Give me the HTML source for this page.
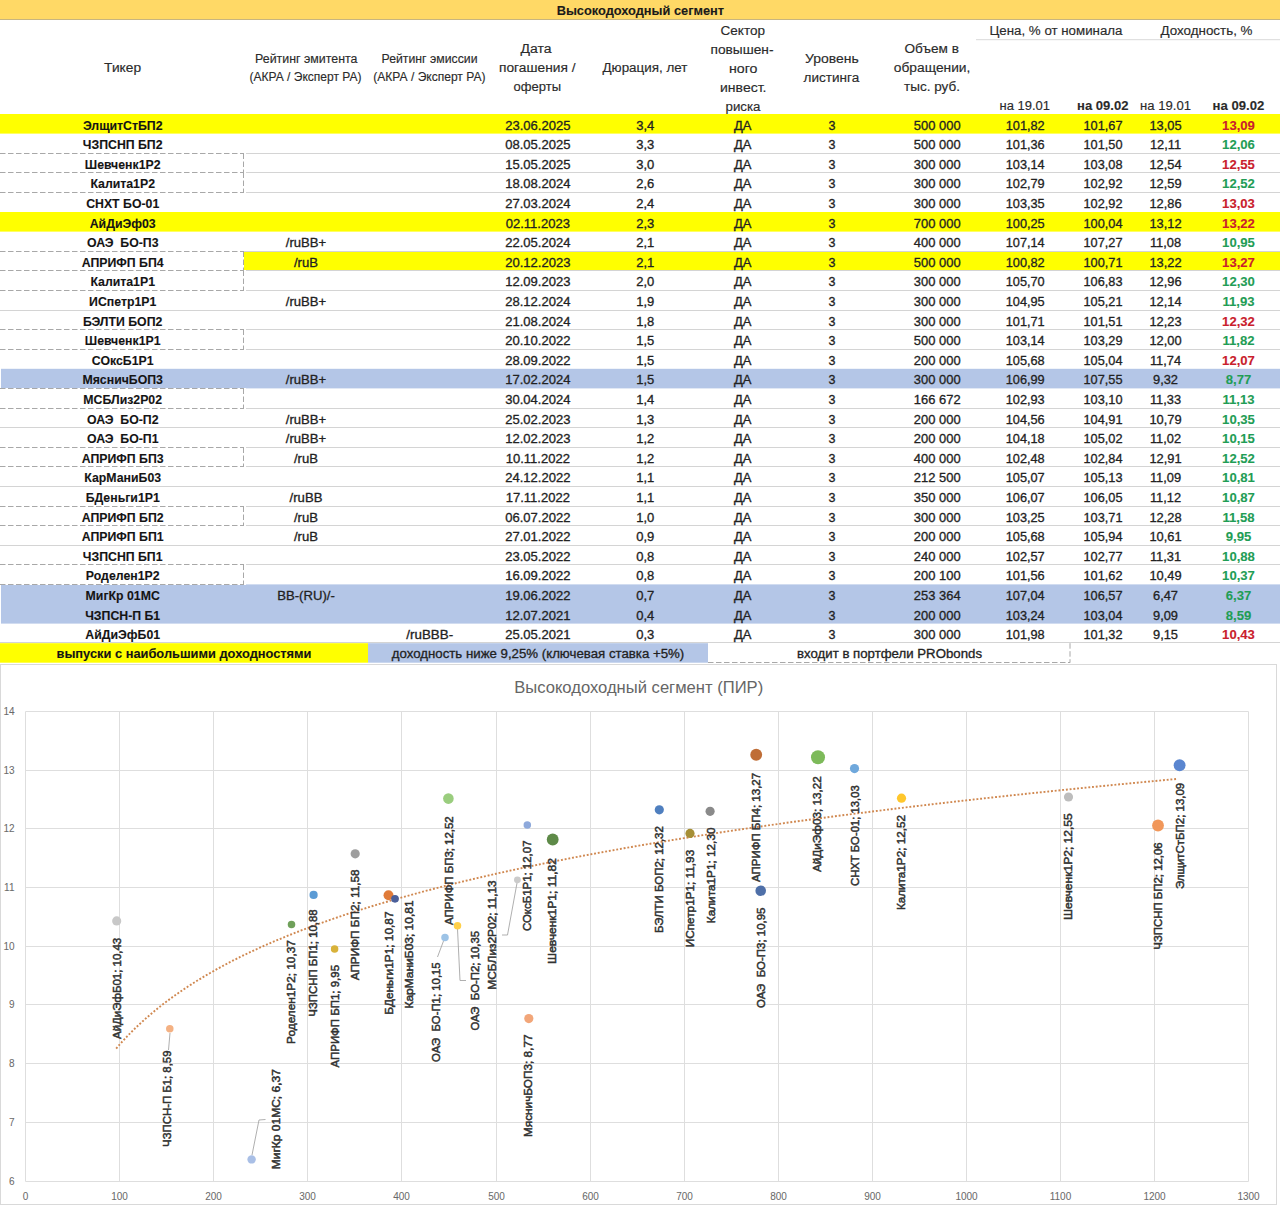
<!DOCTYPE html>
<html><head><meta charset="utf-8"><title>Высокодоходный сегмент</title>
<style>html,body{margin:0;padding:0;background:#fff;width:1280px;height:1210px;overflow:hidden}svg{display:block}text{font-family:"Liberation Sans",sans-serif}</style>
</head><body>
<svg width="1280" height="1210" viewBox="0 0 1280 1210" font-family='"Liberation Sans", sans-serif'><rect x="0.00" y="0.00" width="1280.00" height="19.50" fill="#FFD966" />
<line x1="0.00" y1="19.50" x2="1280.00" y2="19.50" stroke="#C7B57F" stroke-width="1" />
<text x="640.40" y="15.30" font-size="12.5" font-weight="bold" fill="#1a1a1a" stroke="#1a1a1a" stroke-width="0.1" text-anchor="middle" textLength="167.50" lengthAdjust="spacingAndGlyphs" >Высокодоходный сегмент</text>
<line x1="976.00" y1="39.70" x2="1280.00" y2="39.70" stroke="#D9D9D9" stroke-width="1" />
<rect x="0.00" y="114.00" width="1280.00" height="19.60" fill="#FFFF00" />
<rect x="0.00" y="212.00" width="1280.00" height="19.60" fill="#FFFF00" />
<rect x="244.00" y="251.20" width="1036.00" height="19.60" fill="#FFFF00" />
<rect x="1.00" y="368.80" width="1279.00" height="19.60" fill="#B4C6E7" />
<rect x="1.00" y="584.40" width="1279.00" height="19.60" fill="#B4C6E7" />
<rect x="1.00" y="604.00" width="1279.00" height="19.60" fill="#B4C6E7" />
<line x1="0.00" y1="153.50" x2="1280.00" y2="153.50" stroke="#D4D4D4" stroke-width="1" />
<line x1="0.00" y1="172.50" x2="1280.00" y2="172.50" stroke="#D4D4D4" stroke-width="1" />
<line x1="0.00" y1="192.50" x2="1280.00" y2="192.50" stroke="#D4D4D4" stroke-width="1" />
<line x1="0.00" y1="251.50" x2="1280.00" y2="251.50" stroke="#D4D4D4" stroke-width="1" />
<line x1="0.00" y1="270.50" x2="1280.00" y2="270.50" stroke="#D4D4D4" stroke-width="1" />
<line x1="0.00" y1="290.50" x2="1280.00" y2="290.50" stroke="#D4D4D4" stroke-width="1" />
<line x1="0.00" y1="310.50" x2="1280.00" y2="310.50" stroke="#D4D4D4" stroke-width="1" />
<line x1="0.00" y1="329.50" x2="1280.00" y2="329.50" stroke="#D4D4D4" stroke-width="1" />
<line x1="0.00" y1="349.50" x2="1280.00" y2="349.50" stroke="#D4D4D4" stroke-width="1" />
<line x1="0.00" y1="408.50" x2="1280.00" y2="408.50" stroke="#D4D4D4" stroke-width="1" />
<line x1="0.00" y1="427.50" x2="1280.00" y2="427.50" stroke="#D4D4D4" stroke-width="1" />
<line x1="0.00" y1="447.50" x2="1280.00" y2="447.50" stroke="#D4D4D4" stroke-width="1" />
<line x1="0.00" y1="466.50" x2="1280.00" y2="466.50" stroke="#D4D4D4" stroke-width="1" />
<line x1="0.00" y1="486.50" x2="1280.00" y2="486.50" stroke="#D4D4D4" stroke-width="1" />
<line x1="0.00" y1="506.50" x2="1280.00" y2="506.50" stroke="#D4D4D4" stroke-width="1" />
<line x1="0.00" y1="525.50" x2="1280.00" y2="525.50" stroke="#D4D4D4" stroke-width="1" />
<line x1="0.00" y1="545.50" x2="1280.00" y2="545.50" stroke="#D4D4D4" stroke-width="1" />
<line x1="0.00" y1="564.50" x2="1280.00" y2="564.50" stroke="#D4D4D4" stroke-width="1" />
<line x1="0.00" y1="642.50" x2="1280.00" y2="642.50" stroke="#D4D4D4" stroke-width="1" />
<rect x="0.00" y="153.00" width="246.00" height="20.00" fill="#FFFFFF" />
<line x1="0.00" y1="153.50" x2="244.00" y2="153.50" stroke="#A8A8A8" stroke-width="1" stroke-dasharray="5.5 2.5"/>
<line x1="0.00" y1="172.50" x2="244.00" y2="172.50" stroke="#A8A8A8" stroke-width="1" stroke-dasharray="5.5 2.5"/>
<line x1="243.50" y1="153.50" x2="243.50" y2="172.50" stroke="#A8A8A8" stroke-width="1" stroke-dasharray="5.5 2.5"/>
<rect x="0.00" y="172.00" width="246.00" height="21.00" fill="#FFFFFF" />
<line x1="0.00" y1="172.50" x2="244.00" y2="172.50" stroke="#A8A8A8" stroke-width="1" stroke-dasharray="5.5 2.5"/>
<line x1="0.00" y1="192.50" x2="244.00" y2="192.50" stroke="#A8A8A8" stroke-width="1" stroke-dasharray="5.5 2.5"/>
<line x1="243.50" y1="172.50" x2="243.50" y2="192.50" stroke="#A8A8A8" stroke-width="1" stroke-dasharray="5.5 2.5"/>
<rect x="0.00" y="251.00" width="244.00" height="20.00" fill="#FFFFFF" />
<line x1="0.00" y1="251.50" x2="244.00" y2="251.50" stroke="#A8A8A8" stroke-width="1" stroke-dasharray="5.5 2.5"/>
<line x1="0.00" y1="270.50" x2="244.00" y2="270.50" stroke="#A8A8A8" stroke-width="1" stroke-dasharray="5.5 2.5"/>
<line x1="243.50" y1="251.50" x2="243.50" y2="270.50" stroke="#A8A8A8" stroke-width="1" stroke-dasharray="5.5 2.5"/>
<rect x="0.00" y="270.00" width="246.00" height="21.00" fill="#FFFFFF" />
<line x1="0.00" y1="270.50" x2="244.00" y2="270.50" stroke="#A8A8A8" stroke-width="1" stroke-dasharray="5.5 2.5"/>
<line x1="0.00" y1="290.50" x2="244.00" y2="290.50" stroke="#A8A8A8" stroke-width="1" stroke-dasharray="5.5 2.5"/>
<line x1="243.50" y1="270.50" x2="243.50" y2="290.50" stroke="#A8A8A8" stroke-width="1" stroke-dasharray="5.5 2.5"/>
<rect x="0.00" y="329.00" width="246.00" height="21.00" fill="#FFFFFF" />
<line x1="0.00" y1="329.50" x2="244.00" y2="329.50" stroke="#A8A8A8" stroke-width="1" stroke-dasharray="5.5 2.5"/>
<line x1="0.00" y1="349.50" x2="244.00" y2="349.50" stroke="#A8A8A8" stroke-width="1" stroke-dasharray="5.5 2.5"/>
<line x1="243.50" y1="329.50" x2="243.50" y2="349.50" stroke="#A8A8A8" stroke-width="1" stroke-dasharray="5.5 2.5"/>
<rect x="0.00" y="388.00" width="246.00" height="21.00" fill="#FFFFFF" />
<line x1="0.00" y1="388.50" x2="244.00" y2="388.50" stroke="#A8A8A8" stroke-width="1" stroke-dasharray="5.5 2.5"/>
<line x1="0.00" y1="408.50" x2="244.00" y2="408.50" stroke="#A8A8A8" stroke-width="1" stroke-dasharray="5.5 2.5"/>
<line x1="243.50" y1="388.50" x2="243.50" y2="408.50" stroke="#A8A8A8" stroke-width="1" stroke-dasharray="5.5 2.5"/>
<rect x="0.00" y="447.00" width="246.00" height="20.00" fill="#FFFFFF" />
<line x1="0.00" y1="447.50" x2="244.00" y2="447.50" stroke="#A8A8A8" stroke-width="1" stroke-dasharray="5.5 2.5"/>
<line x1="0.00" y1="466.50" x2="244.00" y2="466.50" stroke="#A8A8A8" stroke-width="1" stroke-dasharray="5.5 2.5"/>
<line x1="243.50" y1="447.50" x2="243.50" y2="466.50" stroke="#A8A8A8" stroke-width="1" stroke-dasharray="5.5 2.5"/>
<rect x="0.00" y="506.00" width="246.00" height="20.00" fill="#FFFFFF" />
<line x1="0.00" y1="506.50" x2="244.00" y2="506.50" stroke="#A8A8A8" stroke-width="1" stroke-dasharray="5.5 2.5"/>
<line x1="0.00" y1="525.50" x2="244.00" y2="525.50" stroke="#A8A8A8" stroke-width="1" stroke-dasharray="5.5 2.5"/>
<line x1="243.50" y1="506.50" x2="243.50" y2="525.50" stroke="#A8A8A8" stroke-width="1" stroke-dasharray="5.5 2.5"/>
<rect x="0.00" y="564.00" width="246.00" height="21.00" fill="#FFFFFF" />
<line x1="0.00" y1="564.50" x2="244.00" y2="564.50" stroke="#A8A8A8" stroke-width="1" stroke-dasharray="5.5 2.5"/>
<line x1="0.00" y1="584.50" x2="244.00" y2="584.50" stroke="#A8A8A8" stroke-width="1" stroke-dasharray="5.5 2.5"/>
<line x1="243.50" y1="564.50" x2="243.50" y2="584.50" stroke="#A8A8A8" stroke-width="1" stroke-dasharray="5.5 2.5"/>
<text x="122.70" y="129.60" font-size="12.3" font-weight="bold" fill="#141414" stroke="#141414" stroke-width="0.1" text-anchor="middle" >ЭлщитСтБП2</text>
<text transform="translate(537.80,129.60) scale(1.045,1)" font-size="12.5" fill="#222" stroke="#222" stroke-width="0.3" text-anchor="middle" >23.06.2025</text>
<text transform="translate(645.30,129.60) scale(1.04,1)" font-size="12.5" fill="#222" stroke="#222" stroke-width="0.3" text-anchor="middle" >3,4</text>
<text transform="translate(742.80,129.60) scale(1.04,1)" font-size="12.5" fill="#222" stroke="#222" stroke-width="0.3" text-anchor="middle" >ДА</text>
<text x="832.00" y="129.60" font-size="12.5" fill="#222" stroke="#222" stroke-width="0.3" text-anchor="middle" >3</text>
<text transform="translate(937.20,129.60) scale(1.036,1)" font-size="12.5" fill="#222" stroke="#222" stroke-width="0.3" text-anchor="middle" >500 000</text>
<text transform="translate(1025.20,129.60) scale(1.02,1)" font-size="12.5" fill="#222" stroke="#222" stroke-width="0.3" text-anchor="middle" >101,82</text>
<text transform="translate(1103.00,129.60) scale(1.02,1)" font-size="12.5" fill="#222" stroke="#222" stroke-width="0.3" text-anchor="middle" >101,67</text>
<text transform="translate(1165.50,129.60) scale(1.03,1)" font-size="12.5" fill="#222" stroke="#222" stroke-width="0.3" text-anchor="middle" >13,05</text>
<text transform="translate(1238.50,129.60) scale(1.05,1)" font-size="12.5" font-weight="bold" fill="#C9202C" stroke="#C9202C" stroke-width="0.1" text-anchor="middle" >13,09</text>
<text x="122.70" y="149.20" font-size="12.3" font-weight="bold" fill="#141414" stroke="#141414" stroke-width="0.1" text-anchor="middle" >ЧЗПСНП БП2</text>
<text transform="translate(537.80,149.20) scale(1.045,1)" font-size="12.5" fill="#222" stroke="#222" stroke-width="0.3" text-anchor="middle" >08.05.2025</text>
<text transform="translate(645.30,149.20) scale(1.04,1)" font-size="12.5" fill="#222" stroke="#222" stroke-width="0.3" text-anchor="middle" >3,3</text>
<text transform="translate(742.80,149.20) scale(1.04,1)" font-size="12.5" fill="#222" stroke="#222" stroke-width="0.3" text-anchor="middle" >ДА</text>
<text x="832.00" y="149.20" font-size="12.5" fill="#222" stroke="#222" stroke-width="0.3" text-anchor="middle" >3</text>
<text transform="translate(937.20,149.20) scale(1.036,1)" font-size="12.5" fill="#222" stroke="#222" stroke-width="0.3" text-anchor="middle" >500 000</text>
<text transform="translate(1025.20,149.20) scale(1.02,1)" font-size="12.5" fill="#222" stroke="#222" stroke-width="0.3" text-anchor="middle" >101,36</text>
<text transform="translate(1103.00,149.20) scale(1.02,1)" font-size="12.5" fill="#222" stroke="#222" stroke-width="0.3" text-anchor="middle" >101,50</text>
<text transform="translate(1165.50,149.20) scale(1.03,1)" font-size="12.5" fill="#222" stroke="#222" stroke-width="0.3" text-anchor="middle" >12,11</text>
<text transform="translate(1238.50,149.20) scale(1.05,1)" font-size="12.5" font-weight="bold" fill="#1F9D55" stroke="#1F9D55" stroke-width="0.1" text-anchor="middle" >12,06</text>
<text x="122.70" y="168.80" font-size="12.3" font-weight="bold" fill="#141414" stroke="#141414" stroke-width="0.1" text-anchor="middle" >Шевченк1Р2</text>
<text transform="translate(537.80,168.80) scale(1.045,1)" font-size="12.5" fill="#222" stroke="#222" stroke-width="0.3" text-anchor="middle" >15.05.2025</text>
<text transform="translate(645.30,168.80) scale(1.04,1)" font-size="12.5" fill="#222" stroke="#222" stroke-width="0.3" text-anchor="middle" >3,0</text>
<text transform="translate(742.80,168.80) scale(1.04,1)" font-size="12.5" fill="#222" stroke="#222" stroke-width="0.3" text-anchor="middle" >ДА</text>
<text x="832.00" y="168.80" font-size="12.5" fill="#222" stroke="#222" stroke-width="0.3" text-anchor="middle" >3</text>
<text transform="translate(937.20,168.80) scale(1.036,1)" font-size="12.5" fill="#222" stroke="#222" stroke-width="0.3" text-anchor="middle" >300 000</text>
<text transform="translate(1025.20,168.80) scale(1.02,1)" font-size="12.5" fill="#222" stroke="#222" stroke-width="0.3" text-anchor="middle" >103,14</text>
<text transform="translate(1103.00,168.80) scale(1.02,1)" font-size="12.5" fill="#222" stroke="#222" stroke-width="0.3" text-anchor="middle" >103,08</text>
<text transform="translate(1165.50,168.80) scale(1.03,1)" font-size="12.5" fill="#222" stroke="#222" stroke-width="0.3" text-anchor="middle" >12,54</text>
<text transform="translate(1238.50,168.80) scale(1.05,1)" font-size="12.5" font-weight="bold" fill="#C9202C" stroke="#C9202C" stroke-width="0.1" text-anchor="middle" >12,55</text>
<text x="122.70" y="188.40" font-size="12.3" font-weight="bold" fill="#141414" stroke="#141414" stroke-width="0.1" text-anchor="middle" >Калита1Р2</text>
<text transform="translate(537.80,188.40) scale(1.045,1)" font-size="12.5" fill="#222" stroke="#222" stroke-width="0.3" text-anchor="middle" >18.08.2024</text>
<text transform="translate(645.30,188.40) scale(1.04,1)" font-size="12.5" fill="#222" stroke="#222" stroke-width="0.3" text-anchor="middle" >2,6</text>
<text transform="translate(742.80,188.40) scale(1.04,1)" font-size="12.5" fill="#222" stroke="#222" stroke-width="0.3" text-anchor="middle" >ДА</text>
<text x="832.00" y="188.40" font-size="12.5" fill="#222" stroke="#222" stroke-width="0.3" text-anchor="middle" >3</text>
<text transform="translate(937.20,188.40) scale(1.036,1)" font-size="12.5" fill="#222" stroke="#222" stroke-width="0.3" text-anchor="middle" >300 000</text>
<text transform="translate(1025.20,188.40) scale(1.02,1)" font-size="12.5" fill="#222" stroke="#222" stroke-width="0.3" text-anchor="middle" >102,79</text>
<text transform="translate(1103.00,188.40) scale(1.02,1)" font-size="12.5" fill="#222" stroke="#222" stroke-width="0.3" text-anchor="middle" >102,92</text>
<text transform="translate(1165.50,188.40) scale(1.03,1)" font-size="12.5" fill="#222" stroke="#222" stroke-width="0.3" text-anchor="middle" >12,59</text>
<text transform="translate(1238.50,188.40) scale(1.05,1)" font-size="12.5" font-weight="bold" fill="#1F9D55" stroke="#1F9D55" stroke-width="0.1" text-anchor="middle" >12,52</text>
<text x="122.70" y="208.00" font-size="12.3" font-weight="bold" fill="#141414" stroke="#141414" stroke-width="0.1" text-anchor="middle" >СНХТ БО-01</text>
<text transform="translate(537.80,208.00) scale(1.045,1)" font-size="12.5" fill="#222" stroke="#222" stroke-width="0.3" text-anchor="middle" >27.03.2024</text>
<text transform="translate(645.30,208.00) scale(1.04,1)" font-size="12.5" fill="#222" stroke="#222" stroke-width="0.3" text-anchor="middle" >2,4</text>
<text transform="translate(742.80,208.00) scale(1.04,1)" font-size="12.5" fill="#222" stroke="#222" stroke-width="0.3" text-anchor="middle" >ДА</text>
<text x="832.00" y="208.00" font-size="12.5" fill="#222" stroke="#222" stroke-width="0.3" text-anchor="middle" >3</text>
<text transform="translate(937.20,208.00) scale(1.036,1)" font-size="12.5" fill="#222" stroke="#222" stroke-width="0.3" text-anchor="middle" >300 000</text>
<text transform="translate(1025.20,208.00) scale(1.02,1)" font-size="12.5" fill="#222" stroke="#222" stroke-width="0.3" text-anchor="middle" >103,35</text>
<text transform="translate(1103.00,208.00) scale(1.02,1)" font-size="12.5" fill="#222" stroke="#222" stroke-width="0.3" text-anchor="middle" >102,92</text>
<text transform="translate(1165.50,208.00) scale(1.03,1)" font-size="12.5" fill="#222" stroke="#222" stroke-width="0.3" text-anchor="middle" >12,86</text>
<text transform="translate(1238.50,208.00) scale(1.05,1)" font-size="12.5" font-weight="bold" fill="#C9202C" stroke="#C9202C" stroke-width="0.1" text-anchor="middle" >13,03</text>
<text x="122.70" y="227.60" font-size="12.3" font-weight="bold" fill="#141414" stroke="#141414" stroke-width="0.1" text-anchor="middle" >АйДиЭф03</text>
<text transform="translate(537.80,227.60) scale(1.045,1)" font-size="12.5" fill="#222" stroke="#222" stroke-width="0.3" text-anchor="middle" >02.11.2023</text>
<text transform="translate(645.30,227.60) scale(1.04,1)" font-size="12.5" fill="#222" stroke="#222" stroke-width="0.3" text-anchor="middle" >2,3</text>
<text transform="translate(742.80,227.60) scale(1.04,1)" font-size="12.5" fill="#222" stroke="#222" stroke-width="0.3" text-anchor="middle" >ДА</text>
<text x="832.00" y="227.60" font-size="12.5" fill="#222" stroke="#222" stroke-width="0.3" text-anchor="middle" >3</text>
<text transform="translate(937.20,227.60) scale(1.036,1)" font-size="12.5" fill="#222" stroke="#222" stroke-width="0.3" text-anchor="middle" >700 000</text>
<text transform="translate(1025.20,227.60) scale(1.02,1)" font-size="12.5" fill="#222" stroke="#222" stroke-width="0.3" text-anchor="middle" >100,25</text>
<text transform="translate(1103.00,227.60) scale(1.02,1)" font-size="12.5" fill="#222" stroke="#222" stroke-width="0.3" text-anchor="middle" >100,04</text>
<text transform="translate(1165.50,227.60) scale(1.03,1)" font-size="12.5" fill="#222" stroke="#222" stroke-width="0.3" text-anchor="middle" >13,12</text>
<text transform="translate(1238.50,227.60) scale(1.05,1)" font-size="12.5" font-weight="bold" fill="#C9202C" stroke="#C9202C" stroke-width="0.1" text-anchor="middle" >13,22</text>
<text x="122.70" y="247.20" font-size="12.3" font-weight="bold" fill="#141414" stroke="#141414" stroke-width="0.1" text-anchor="middle" >ОАЭ  БО-П3</text>
<text transform="translate(306.00,247.20) scale(1.05,1)" font-size="12.5" fill="#222" stroke="#222" stroke-width="0.3" text-anchor="middle" >/ruBB+</text>
<text transform="translate(537.80,247.20) scale(1.045,1)" font-size="12.5" fill="#222" stroke="#222" stroke-width="0.3" text-anchor="middle" >22.05.2024</text>
<text transform="translate(645.30,247.20) scale(1.04,1)" font-size="12.5" fill="#222" stroke="#222" stroke-width="0.3" text-anchor="middle" >2,1</text>
<text transform="translate(742.80,247.20) scale(1.04,1)" font-size="12.5" fill="#222" stroke="#222" stroke-width="0.3" text-anchor="middle" >ДА</text>
<text x="832.00" y="247.20" font-size="12.5" fill="#222" stroke="#222" stroke-width="0.3" text-anchor="middle" >3</text>
<text transform="translate(937.20,247.20) scale(1.036,1)" font-size="12.5" fill="#222" stroke="#222" stroke-width="0.3" text-anchor="middle" >400 000</text>
<text transform="translate(1025.20,247.20) scale(1.02,1)" font-size="12.5" fill="#222" stroke="#222" stroke-width="0.3" text-anchor="middle" >107,14</text>
<text transform="translate(1103.00,247.20) scale(1.02,1)" font-size="12.5" fill="#222" stroke="#222" stroke-width="0.3" text-anchor="middle" >107,27</text>
<text transform="translate(1165.50,247.20) scale(1.03,1)" font-size="12.5" fill="#222" stroke="#222" stroke-width="0.3" text-anchor="middle" >11,08</text>
<text transform="translate(1238.50,247.20) scale(1.05,1)" font-size="12.5" font-weight="bold" fill="#1F9D55" stroke="#1F9D55" stroke-width="0.1" text-anchor="middle" >10,95</text>
<text x="122.70" y="266.80" font-size="12.3" font-weight="bold" fill="#141414" stroke="#141414" stroke-width="0.1" text-anchor="middle" >АПРИФП БП4</text>
<text transform="translate(306.00,266.80) scale(1.05,1)" font-size="12.5" fill="#222" stroke="#222" stroke-width="0.3" text-anchor="middle" >/ruB</text>
<text transform="translate(537.80,266.80) scale(1.045,1)" font-size="12.5" fill="#222" stroke="#222" stroke-width="0.3" text-anchor="middle" >20.12.2023</text>
<text transform="translate(645.30,266.80) scale(1.04,1)" font-size="12.5" fill="#222" stroke="#222" stroke-width="0.3" text-anchor="middle" >2,1</text>
<text transform="translate(742.80,266.80) scale(1.04,1)" font-size="12.5" fill="#222" stroke="#222" stroke-width="0.3" text-anchor="middle" >ДА</text>
<text x="832.00" y="266.80" font-size="12.5" fill="#222" stroke="#222" stroke-width="0.3" text-anchor="middle" >3</text>
<text transform="translate(937.20,266.80) scale(1.036,1)" font-size="12.5" fill="#222" stroke="#222" stroke-width="0.3" text-anchor="middle" >500 000</text>
<text transform="translate(1025.20,266.80) scale(1.02,1)" font-size="12.5" fill="#222" stroke="#222" stroke-width="0.3" text-anchor="middle" >100,82</text>
<text transform="translate(1103.00,266.80) scale(1.02,1)" font-size="12.5" fill="#222" stroke="#222" stroke-width="0.3" text-anchor="middle" >100,71</text>
<text transform="translate(1165.50,266.80) scale(1.03,1)" font-size="12.5" fill="#222" stroke="#222" stroke-width="0.3" text-anchor="middle" >13,22</text>
<text transform="translate(1238.50,266.80) scale(1.05,1)" font-size="12.5" font-weight="bold" fill="#C9202C" stroke="#C9202C" stroke-width="0.1" text-anchor="middle" >13,27</text>
<text x="122.70" y="286.40" font-size="12.3" font-weight="bold" fill="#141414" stroke="#141414" stroke-width="0.1" text-anchor="middle" >Калита1Р1</text>
<text transform="translate(537.80,286.40) scale(1.045,1)" font-size="12.5" fill="#222" stroke="#222" stroke-width="0.3" text-anchor="middle" >12.09.2023</text>
<text transform="translate(645.30,286.40) scale(1.04,1)" font-size="12.5" fill="#222" stroke="#222" stroke-width="0.3" text-anchor="middle" >2,0</text>
<text transform="translate(742.80,286.40) scale(1.04,1)" font-size="12.5" fill="#222" stroke="#222" stroke-width="0.3" text-anchor="middle" >ДА</text>
<text x="832.00" y="286.40" font-size="12.5" fill="#222" stroke="#222" stroke-width="0.3" text-anchor="middle" >3</text>
<text transform="translate(937.20,286.40) scale(1.036,1)" font-size="12.5" fill="#222" stroke="#222" stroke-width="0.3" text-anchor="middle" >300 000</text>
<text transform="translate(1025.20,286.40) scale(1.02,1)" font-size="12.5" fill="#222" stroke="#222" stroke-width="0.3" text-anchor="middle" >105,70</text>
<text transform="translate(1103.00,286.40) scale(1.02,1)" font-size="12.5" fill="#222" stroke="#222" stroke-width="0.3" text-anchor="middle" >106,83</text>
<text transform="translate(1165.50,286.40) scale(1.03,1)" font-size="12.5" fill="#222" stroke="#222" stroke-width="0.3" text-anchor="middle" >12,96</text>
<text transform="translate(1238.50,286.40) scale(1.05,1)" font-size="12.5" font-weight="bold" fill="#1F9D55" stroke="#1F9D55" stroke-width="0.1" text-anchor="middle" >12,30</text>
<text x="122.70" y="306.00" font-size="12.3" font-weight="bold" fill="#141414" stroke="#141414" stroke-width="0.1" text-anchor="middle" >ИСпетр1Р1</text>
<text transform="translate(306.00,306.00) scale(1.05,1)" font-size="12.5" fill="#222" stroke="#222" stroke-width="0.3" text-anchor="middle" >/ruBB+</text>
<text transform="translate(537.80,306.00) scale(1.045,1)" font-size="12.5" fill="#222" stroke="#222" stroke-width="0.3" text-anchor="middle" >28.12.2024</text>
<text transform="translate(645.30,306.00) scale(1.04,1)" font-size="12.5" fill="#222" stroke="#222" stroke-width="0.3" text-anchor="middle" >1,9</text>
<text transform="translate(742.80,306.00) scale(1.04,1)" font-size="12.5" fill="#222" stroke="#222" stroke-width="0.3" text-anchor="middle" >ДА</text>
<text x="832.00" y="306.00" font-size="12.5" fill="#222" stroke="#222" stroke-width="0.3" text-anchor="middle" >3</text>
<text transform="translate(937.20,306.00) scale(1.036,1)" font-size="12.5" fill="#222" stroke="#222" stroke-width="0.3" text-anchor="middle" >300 000</text>
<text transform="translate(1025.20,306.00) scale(1.02,1)" font-size="12.5" fill="#222" stroke="#222" stroke-width="0.3" text-anchor="middle" >104,95</text>
<text transform="translate(1103.00,306.00) scale(1.02,1)" font-size="12.5" fill="#222" stroke="#222" stroke-width="0.3" text-anchor="middle" >105,21</text>
<text transform="translate(1165.50,306.00) scale(1.03,1)" font-size="12.5" fill="#222" stroke="#222" stroke-width="0.3" text-anchor="middle" >12,14</text>
<text transform="translate(1238.50,306.00) scale(1.05,1)" font-size="12.5" font-weight="bold" fill="#1F9D55" stroke="#1F9D55" stroke-width="0.1" text-anchor="middle" >11,93</text>
<text x="122.70" y="325.60" font-size="12.3" font-weight="bold" fill="#141414" stroke="#141414" stroke-width="0.1" text-anchor="middle" >БЭЛТИ БОП2</text>
<text transform="translate(537.80,325.60) scale(1.045,1)" font-size="12.5" fill="#222" stroke="#222" stroke-width="0.3" text-anchor="middle" >21.08.2024</text>
<text transform="translate(645.30,325.60) scale(1.04,1)" font-size="12.5" fill="#222" stroke="#222" stroke-width="0.3" text-anchor="middle" >1,8</text>
<text transform="translate(742.80,325.60) scale(1.04,1)" font-size="12.5" fill="#222" stroke="#222" stroke-width="0.3" text-anchor="middle" >ДА</text>
<text x="832.00" y="325.60" font-size="12.5" fill="#222" stroke="#222" stroke-width="0.3" text-anchor="middle" >3</text>
<text transform="translate(937.20,325.60) scale(1.036,1)" font-size="12.5" fill="#222" stroke="#222" stroke-width="0.3" text-anchor="middle" >300 000</text>
<text transform="translate(1025.20,325.60) scale(1.02,1)" font-size="12.5" fill="#222" stroke="#222" stroke-width="0.3" text-anchor="middle" >101,71</text>
<text transform="translate(1103.00,325.60) scale(1.02,1)" font-size="12.5" fill="#222" stroke="#222" stroke-width="0.3" text-anchor="middle" >101,51</text>
<text transform="translate(1165.50,325.60) scale(1.03,1)" font-size="12.5" fill="#222" stroke="#222" stroke-width="0.3" text-anchor="middle" >12,23</text>
<text transform="translate(1238.50,325.60) scale(1.05,1)" font-size="12.5" font-weight="bold" fill="#C9202C" stroke="#C9202C" stroke-width="0.1" text-anchor="middle" >12,32</text>
<text x="122.70" y="345.20" font-size="12.3" font-weight="bold" fill="#141414" stroke="#141414" stroke-width="0.1" text-anchor="middle" >Шевченк1Р1</text>
<text transform="translate(537.80,345.20) scale(1.045,1)" font-size="12.5" fill="#222" stroke="#222" stroke-width="0.3" text-anchor="middle" >20.10.2022</text>
<text transform="translate(645.30,345.20) scale(1.04,1)" font-size="12.5" fill="#222" stroke="#222" stroke-width="0.3" text-anchor="middle" >1,5</text>
<text transform="translate(742.80,345.20) scale(1.04,1)" font-size="12.5" fill="#222" stroke="#222" stroke-width="0.3" text-anchor="middle" >ДА</text>
<text x="832.00" y="345.20" font-size="12.5" fill="#222" stroke="#222" stroke-width="0.3" text-anchor="middle" >3</text>
<text transform="translate(937.20,345.20) scale(1.036,1)" font-size="12.5" fill="#222" stroke="#222" stroke-width="0.3" text-anchor="middle" >500 000</text>
<text transform="translate(1025.20,345.20) scale(1.02,1)" font-size="12.5" fill="#222" stroke="#222" stroke-width="0.3" text-anchor="middle" >103,14</text>
<text transform="translate(1103.00,345.20) scale(1.02,1)" font-size="12.5" fill="#222" stroke="#222" stroke-width="0.3" text-anchor="middle" >103,29</text>
<text transform="translate(1165.50,345.20) scale(1.03,1)" font-size="12.5" fill="#222" stroke="#222" stroke-width="0.3" text-anchor="middle" >12,00</text>
<text transform="translate(1238.50,345.20) scale(1.05,1)" font-size="12.5" font-weight="bold" fill="#1F9D55" stroke="#1F9D55" stroke-width="0.1" text-anchor="middle" >11,82</text>
<text x="122.70" y="364.80" font-size="12.3" font-weight="bold" fill="#141414" stroke="#141414" stroke-width="0.1" text-anchor="middle" >СОксБ1Р1</text>
<text transform="translate(537.80,364.80) scale(1.045,1)" font-size="12.5" fill="#222" stroke="#222" stroke-width="0.3" text-anchor="middle" >28.09.2022</text>
<text transform="translate(645.30,364.80) scale(1.04,1)" font-size="12.5" fill="#222" stroke="#222" stroke-width="0.3" text-anchor="middle" >1,5</text>
<text transform="translate(742.80,364.80) scale(1.04,1)" font-size="12.5" fill="#222" stroke="#222" stroke-width="0.3" text-anchor="middle" >ДА</text>
<text x="832.00" y="364.80" font-size="12.5" fill="#222" stroke="#222" stroke-width="0.3" text-anchor="middle" >3</text>
<text transform="translate(937.20,364.80) scale(1.036,1)" font-size="12.5" fill="#222" stroke="#222" stroke-width="0.3" text-anchor="middle" >200 000</text>
<text transform="translate(1025.20,364.80) scale(1.02,1)" font-size="12.5" fill="#222" stroke="#222" stroke-width="0.3" text-anchor="middle" >105,68</text>
<text transform="translate(1103.00,364.80) scale(1.02,1)" font-size="12.5" fill="#222" stroke="#222" stroke-width="0.3" text-anchor="middle" >105,04</text>
<text transform="translate(1165.50,364.80) scale(1.03,1)" font-size="12.5" fill="#222" stroke="#222" stroke-width="0.3" text-anchor="middle" >11,74</text>
<text transform="translate(1238.50,364.80) scale(1.05,1)" font-size="12.5" font-weight="bold" fill="#C9202C" stroke="#C9202C" stroke-width="0.1" text-anchor="middle" >12,07</text>
<text x="122.70" y="384.40" font-size="12.3" font-weight="bold" fill="#141414" stroke="#141414" stroke-width="0.1" text-anchor="middle" >МясничБОП3</text>
<text transform="translate(306.00,384.40) scale(1.05,1)" font-size="12.5" fill="#222" stroke="#222" stroke-width="0.3" text-anchor="middle" >/ruBB+</text>
<text transform="translate(537.80,384.40) scale(1.045,1)" font-size="12.5" fill="#222" stroke="#222" stroke-width="0.3" text-anchor="middle" >17.02.2024</text>
<text transform="translate(645.30,384.40) scale(1.04,1)" font-size="12.5" fill="#222" stroke="#222" stroke-width="0.3" text-anchor="middle" >1,5</text>
<text transform="translate(742.80,384.40) scale(1.04,1)" font-size="12.5" fill="#222" stroke="#222" stroke-width="0.3" text-anchor="middle" >ДА</text>
<text x="832.00" y="384.40" font-size="12.5" fill="#222" stroke="#222" stroke-width="0.3" text-anchor="middle" >3</text>
<text transform="translate(937.20,384.40) scale(1.036,1)" font-size="12.5" fill="#222" stroke="#222" stroke-width="0.3" text-anchor="middle" >300 000</text>
<text transform="translate(1025.20,384.40) scale(1.02,1)" font-size="12.5" fill="#222" stroke="#222" stroke-width="0.3" text-anchor="middle" >106,99</text>
<text transform="translate(1103.00,384.40) scale(1.02,1)" font-size="12.5" fill="#222" stroke="#222" stroke-width="0.3" text-anchor="middle" >107,55</text>
<text transform="translate(1165.50,384.40) scale(1.03,1)" font-size="12.5" fill="#222" stroke="#222" stroke-width="0.3" text-anchor="middle" >9,32</text>
<text transform="translate(1238.50,384.40) scale(1.05,1)" font-size="12.5" font-weight="bold" fill="#1F9D55" stroke="#1F9D55" stroke-width="0.1" text-anchor="middle" >8,77</text>
<text x="122.70" y="404.00" font-size="12.3" font-weight="bold" fill="#141414" stroke="#141414" stroke-width="0.1" text-anchor="middle" >МСБЛиз2Р02</text>
<text transform="translate(537.80,404.00) scale(1.045,1)" font-size="12.5" fill="#222" stroke="#222" stroke-width="0.3" text-anchor="middle" >30.04.2024</text>
<text transform="translate(645.30,404.00) scale(1.04,1)" font-size="12.5" fill="#222" stroke="#222" stroke-width="0.3" text-anchor="middle" >1,4</text>
<text transform="translate(742.80,404.00) scale(1.04,1)" font-size="12.5" fill="#222" stroke="#222" stroke-width="0.3" text-anchor="middle" >ДА</text>
<text x="832.00" y="404.00" font-size="12.5" fill="#222" stroke="#222" stroke-width="0.3" text-anchor="middle" >3</text>
<text transform="translate(937.20,404.00) scale(1.036,1)" font-size="12.5" fill="#222" stroke="#222" stroke-width="0.3" text-anchor="middle" >166 672</text>
<text transform="translate(1025.20,404.00) scale(1.02,1)" font-size="12.5" fill="#222" stroke="#222" stroke-width="0.3" text-anchor="middle" >102,93</text>
<text transform="translate(1103.00,404.00) scale(1.02,1)" font-size="12.5" fill="#222" stroke="#222" stroke-width="0.3" text-anchor="middle" >103,10</text>
<text transform="translate(1165.50,404.00) scale(1.03,1)" font-size="12.5" fill="#222" stroke="#222" stroke-width="0.3" text-anchor="middle" >11,33</text>
<text transform="translate(1238.50,404.00) scale(1.05,1)" font-size="12.5" font-weight="bold" fill="#1F9D55" stroke="#1F9D55" stroke-width="0.1" text-anchor="middle" >11,13</text>
<text x="122.70" y="423.60" font-size="12.3" font-weight="bold" fill="#141414" stroke="#141414" stroke-width="0.1" text-anchor="middle" >ОАЭ  БО-П2</text>
<text transform="translate(306.00,423.60) scale(1.05,1)" font-size="12.5" fill="#222" stroke="#222" stroke-width="0.3" text-anchor="middle" >/ruBB+</text>
<text transform="translate(537.80,423.60) scale(1.045,1)" font-size="12.5" fill="#222" stroke="#222" stroke-width="0.3" text-anchor="middle" >25.02.2023</text>
<text transform="translate(645.30,423.60) scale(1.04,1)" font-size="12.5" fill="#222" stroke="#222" stroke-width="0.3" text-anchor="middle" >1,3</text>
<text transform="translate(742.80,423.60) scale(1.04,1)" font-size="12.5" fill="#222" stroke="#222" stroke-width="0.3" text-anchor="middle" >ДА</text>
<text x="832.00" y="423.60" font-size="12.5" fill="#222" stroke="#222" stroke-width="0.3" text-anchor="middle" >3</text>
<text transform="translate(937.20,423.60) scale(1.036,1)" font-size="12.5" fill="#222" stroke="#222" stroke-width="0.3" text-anchor="middle" >200 000</text>
<text transform="translate(1025.20,423.60) scale(1.02,1)" font-size="12.5" fill="#222" stroke="#222" stroke-width="0.3" text-anchor="middle" >104,56</text>
<text transform="translate(1103.00,423.60) scale(1.02,1)" font-size="12.5" fill="#222" stroke="#222" stroke-width="0.3" text-anchor="middle" >104,91</text>
<text transform="translate(1165.50,423.60) scale(1.03,1)" font-size="12.5" fill="#222" stroke="#222" stroke-width="0.3" text-anchor="middle" >10,79</text>
<text transform="translate(1238.50,423.60) scale(1.05,1)" font-size="12.5" font-weight="bold" fill="#1F9D55" stroke="#1F9D55" stroke-width="0.1" text-anchor="middle" >10,35</text>
<text x="122.70" y="443.20" font-size="12.3" font-weight="bold" fill="#141414" stroke="#141414" stroke-width="0.1" text-anchor="middle" >ОАЭ  БО-П1</text>
<text transform="translate(306.00,443.20) scale(1.05,1)" font-size="12.5" fill="#222" stroke="#222" stroke-width="0.3" text-anchor="middle" >/ruBB+</text>
<text transform="translate(537.80,443.20) scale(1.045,1)" font-size="12.5" fill="#222" stroke="#222" stroke-width="0.3" text-anchor="middle" >12.02.2023</text>
<text transform="translate(645.30,443.20) scale(1.04,1)" font-size="12.5" fill="#222" stroke="#222" stroke-width="0.3" text-anchor="middle" >1,2</text>
<text transform="translate(742.80,443.20) scale(1.04,1)" font-size="12.5" fill="#222" stroke="#222" stroke-width="0.3" text-anchor="middle" >ДА</text>
<text x="832.00" y="443.20" font-size="12.5" fill="#222" stroke="#222" stroke-width="0.3" text-anchor="middle" >3</text>
<text transform="translate(937.20,443.20) scale(1.036,1)" font-size="12.5" fill="#222" stroke="#222" stroke-width="0.3" text-anchor="middle" >200 000</text>
<text transform="translate(1025.20,443.20) scale(1.02,1)" font-size="12.5" fill="#222" stroke="#222" stroke-width="0.3" text-anchor="middle" >104,18</text>
<text transform="translate(1103.00,443.20) scale(1.02,1)" font-size="12.5" fill="#222" stroke="#222" stroke-width="0.3" text-anchor="middle" >105,02</text>
<text transform="translate(1165.50,443.20) scale(1.03,1)" font-size="12.5" fill="#222" stroke="#222" stroke-width="0.3" text-anchor="middle" >11,02</text>
<text transform="translate(1238.50,443.20) scale(1.05,1)" font-size="12.5" font-weight="bold" fill="#1F9D55" stroke="#1F9D55" stroke-width="0.1" text-anchor="middle" >10,15</text>
<text x="122.70" y="462.80" font-size="12.3" font-weight="bold" fill="#141414" stroke="#141414" stroke-width="0.1" text-anchor="middle" >АПРИФП БП3</text>
<text transform="translate(306.00,462.80) scale(1.05,1)" font-size="12.5" fill="#222" stroke="#222" stroke-width="0.3" text-anchor="middle" >/ruB</text>
<text transform="translate(537.80,462.80) scale(1.045,1)" font-size="12.5" fill="#222" stroke="#222" stroke-width="0.3" text-anchor="middle" >10.11.2022</text>
<text transform="translate(645.30,462.80) scale(1.04,1)" font-size="12.5" fill="#222" stroke="#222" stroke-width="0.3" text-anchor="middle" >1,2</text>
<text transform="translate(742.80,462.80) scale(1.04,1)" font-size="12.5" fill="#222" stroke="#222" stroke-width="0.3" text-anchor="middle" >ДА</text>
<text x="832.00" y="462.80" font-size="12.5" fill="#222" stroke="#222" stroke-width="0.3" text-anchor="middle" >3</text>
<text transform="translate(937.20,462.80) scale(1.036,1)" font-size="12.5" fill="#222" stroke="#222" stroke-width="0.3" text-anchor="middle" >400 000</text>
<text transform="translate(1025.20,462.80) scale(1.02,1)" font-size="12.5" fill="#222" stroke="#222" stroke-width="0.3" text-anchor="middle" >102,48</text>
<text transform="translate(1103.00,462.80) scale(1.02,1)" font-size="12.5" fill="#222" stroke="#222" stroke-width="0.3" text-anchor="middle" >102,84</text>
<text transform="translate(1165.50,462.80) scale(1.03,1)" font-size="12.5" fill="#222" stroke="#222" stroke-width="0.3" text-anchor="middle" >12,91</text>
<text transform="translate(1238.50,462.80) scale(1.05,1)" font-size="12.5" font-weight="bold" fill="#1F9D55" stroke="#1F9D55" stroke-width="0.1" text-anchor="middle" >12,52</text>
<text x="122.70" y="482.40" font-size="12.3" font-weight="bold" fill="#141414" stroke="#141414" stroke-width="0.1" text-anchor="middle" >КарМаниБ03</text>
<text transform="translate(537.80,482.40) scale(1.045,1)" font-size="12.5" fill="#222" stroke="#222" stroke-width="0.3" text-anchor="middle" >24.12.2022</text>
<text transform="translate(645.30,482.40) scale(1.04,1)" font-size="12.5" fill="#222" stroke="#222" stroke-width="0.3" text-anchor="middle" >1,1</text>
<text transform="translate(742.80,482.40) scale(1.04,1)" font-size="12.5" fill="#222" stroke="#222" stroke-width="0.3" text-anchor="middle" >ДА</text>
<text x="832.00" y="482.40" font-size="12.5" fill="#222" stroke="#222" stroke-width="0.3" text-anchor="middle" >3</text>
<text transform="translate(937.20,482.40) scale(1.036,1)" font-size="12.5" fill="#222" stroke="#222" stroke-width="0.3" text-anchor="middle" >212 500</text>
<text transform="translate(1025.20,482.40) scale(1.02,1)" font-size="12.5" fill="#222" stroke="#222" stroke-width="0.3" text-anchor="middle" >105,07</text>
<text transform="translate(1103.00,482.40) scale(1.02,1)" font-size="12.5" fill="#222" stroke="#222" stroke-width="0.3" text-anchor="middle" >105,13</text>
<text transform="translate(1165.50,482.40) scale(1.03,1)" font-size="12.5" fill="#222" stroke="#222" stroke-width="0.3" text-anchor="middle" >11,09</text>
<text transform="translate(1238.50,482.40) scale(1.05,1)" font-size="12.5" font-weight="bold" fill="#1F9D55" stroke="#1F9D55" stroke-width="0.1" text-anchor="middle" >10,81</text>
<text x="122.70" y="502.00" font-size="12.3" font-weight="bold" fill="#141414" stroke="#141414" stroke-width="0.1" text-anchor="middle" >БДеньги1Р1</text>
<text transform="translate(306.00,502.00) scale(1.05,1)" font-size="12.5" fill="#222" stroke="#222" stroke-width="0.3" text-anchor="middle" >/ruBB</text>
<text transform="translate(537.80,502.00) scale(1.045,1)" font-size="12.5" fill="#222" stroke="#222" stroke-width="0.3" text-anchor="middle" >17.11.2022</text>
<text transform="translate(645.30,502.00) scale(1.04,1)" font-size="12.5" fill="#222" stroke="#222" stroke-width="0.3" text-anchor="middle" >1,1</text>
<text transform="translate(742.80,502.00) scale(1.04,1)" font-size="12.5" fill="#222" stroke="#222" stroke-width="0.3" text-anchor="middle" >ДА</text>
<text x="832.00" y="502.00" font-size="12.5" fill="#222" stroke="#222" stroke-width="0.3" text-anchor="middle" >3</text>
<text transform="translate(937.20,502.00) scale(1.036,1)" font-size="12.5" fill="#222" stroke="#222" stroke-width="0.3" text-anchor="middle" >350 000</text>
<text transform="translate(1025.20,502.00) scale(1.02,1)" font-size="12.5" fill="#222" stroke="#222" stroke-width="0.3" text-anchor="middle" >106,07</text>
<text transform="translate(1103.00,502.00) scale(1.02,1)" font-size="12.5" fill="#222" stroke="#222" stroke-width="0.3" text-anchor="middle" >106,05</text>
<text transform="translate(1165.50,502.00) scale(1.03,1)" font-size="12.5" fill="#222" stroke="#222" stroke-width="0.3" text-anchor="middle" >11,12</text>
<text transform="translate(1238.50,502.00) scale(1.05,1)" font-size="12.5" font-weight="bold" fill="#1F9D55" stroke="#1F9D55" stroke-width="0.1" text-anchor="middle" >10,87</text>
<text x="122.70" y="521.60" font-size="12.3" font-weight="bold" fill="#141414" stroke="#141414" stroke-width="0.1" text-anchor="middle" >АПРИФП БП2</text>
<text transform="translate(306.00,521.60) scale(1.05,1)" font-size="12.5" fill="#222" stroke="#222" stroke-width="0.3" text-anchor="middle" >/ruB</text>
<text transform="translate(537.80,521.60) scale(1.045,1)" font-size="12.5" fill="#222" stroke="#222" stroke-width="0.3" text-anchor="middle" >06.07.2022</text>
<text transform="translate(645.30,521.60) scale(1.04,1)" font-size="12.5" fill="#222" stroke="#222" stroke-width="0.3" text-anchor="middle" >1,0</text>
<text transform="translate(742.80,521.60) scale(1.04,1)" font-size="12.5" fill="#222" stroke="#222" stroke-width="0.3" text-anchor="middle" >ДА</text>
<text x="832.00" y="521.60" font-size="12.5" fill="#222" stroke="#222" stroke-width="0.3" text-anchor="middle" >3</text>
<text transform="translate(937.20,521.60) scale(1.036,1)" font-size="12.5" fill="#222" stroke="#222" stroke-width="0.3" text-anchor="middle" >300 000</text>
<text transform="translate(1025.20,521.60) scale(1.02,1)" font-size="12.5" fill="#222" stroke="#222" stroke-width="0.3" text-anchor="middle" >103,25</text>
<text transform="translate(1103.00,521.60) scale(1.02,1)" font-size="12.5" fill="#222" stroke="#222" stroke-width="0.3" text-anchor="middle" >103,71</text>
<text transform="translate(1165.50,521.60) scale(1.03,1)" font-size="12.5" fill="#222" stroke="#222" stroke-width="0.3" text-anchor="middle" >12,28</text>
<text transform="translate(1238.50,521.60) scale(1.05,1)" font-size="12.5" font-weight="bold" fill="#1F9D55" stroke="#1F9D55" stroke-width="0.1" text-anchor="middle" >11,58</text>
<text x="122.70" y="541.20" font-size="12.3" font-weight="bold" fill="#141414" stroke="#141414" stroke-width="0.1" text-anchor="middle" >АПРИФП БП1</text>
<text transform="translate(306.00,541.20) scale(1.05,1)" font-size="12.5" fill="#222" stroke="#222" stroke-width="0.3" text-anchor="middle" >/ruB</text>
<text transform="translate(537.80,541.20) scale(1.045,1)" font-size="12.5" fill="#222" stroke="#222" stroke-width="0.3" text-anchor="middle" >27.01.2022</text>
<text transform="translate(645.30,541.20) scale(1.04,1)" font-size="12.5" fill="#222" stroke="#222" stroke-width="0.3" text-anchor="middle" >0,9</text>
<text transform="translate(742.80,541.20) scale(1.04,1)" font-size="12.5" fill="#222" stroke="#222" stroke-width="0.3" text-anchor="middle" >ДА</text>
<text x="832.00" y="541.20" font-size="12.5" fill="#222" stroke="#222" stroke-width="0.3" text-anchor="middle" >3</text>
<text transform="translate(937.20,541.20) scale(1.036,1)" font-size="12.5" fill="#222" stroke="#222" stroke-width="0.3" text-anchor="middle" >200 000</text>
<text transform="translate(1025.20,541.20) scale(1.02,1)" font-size="12.5" fill="#222" stroke="#222" stroke-width="0.3" text-anchor="middle" >105,68</text>
<text transform="translate(1103.00,541.20) scale(1.02,1)" font-size="12.5" fill="#222" stroke="#222" stroke-width="0.3" text-anchor="middle" >105,94</text>
<text transform="translate(1165.50,541.20) scale(1.03,1)" font-size="12.5" fill="#222" stroke="#222" stroke-width="0.3" text-anchor="middle" >10,61</text>
<text transform="translate(1238.50,541.20) scale(1.05,1)" font-size="12.5" font-weight="bold" fill="#1F9D55" stroke="#1F9D55" stroke-width="0.1" text-anchor="middle" >9,95</text>
<text x="122.70" y="560.80" font-size="12.3" font-weight="bold" fill="#141414" stroke="#141414" stroke-width="0.1" text-anchor="middle" >ЧЗПСНП БП1</text>
<text transform="translate(537.80,560.80) scale(1.045,1)" font-size="12.5" fill="#222" stroke="#222" stroke-width="0.3" text-anchor="middle" >23.05.2022</text>
<text transform="translate(645.30,560.80) scale(1.04,1)" font-size="12.5" fill="#222" stroke="#222" stroke-width="0.3" text-anchor="middle" >0,8</text>
<text transform="translate(742.80,560.80) scale(1.04,1)" font-size="12.5" fill="#222" stroke="#222" stroke-width="0.3" text-anchor="middle" >ДА</text>
<text x="832.00" y="560.80" font-size="12.5" fill="#222" stroke="#222" stroke-width="0.3" text-anchor="middle" >3</text>
<text transform="translate(937.20,560.80) scale(1.036,1)" font-size="12.5" fill="#222" stroke="#222" stroke-width="0.3" text-anchor="middle" >240 000</text>
<text transform="translate(1025.20,560.80) scale(1.02,1)" font-size="12.5" fill="#222" stroke="#222" stroke-width="0.3" text-anchor="middle" >102,57</text>
<text transform="translate(1103.00,560.80) scale(1.02,1)" font-size="12.5" fill="#222" stroke="#222" stroke-width="0.3" text-anchor="middle" >102,77</text>
<text transform="translate(1165.50,560.80) scale(1.03,1)" font-size="12.5" fill="#222" stroke="#222" stroke-width="0.3" text-anchor="middle" >11,31</text>
<text transform="translate(1238.50,560.80) scale(1.05,1)" font-size="12.5" font-weight="bold" fill="#1F9D55" stroke="#1F9D55" stroke-width="0.1" text-anchor="middle" >10,88</text>
<text x="122.70" y="580.40" font-size="12.3" font-weight="bold" fill="#141414" stroke="#141414" stroke-width="0.1" text-anchor="middle" >Роделен1Р2</text>
<text transform="translate(537.80,580.40) scale(1.045,1)" font-size="12.5" fill="#222" stroke="#222" stroke-width="0.3" text-anchor="middle" >16.09.2022</text>
<text transform="translate(645.30,580.40) scale(1.04,1)" font-size="12.5" fill="#222" stroke="#222" stroke-width="0.3" text-anchor="middle" >0,8</text>
<text transform="translate(742.80,580.40) scale(1.04,1)" font-size="12.5" fill="#222" stroke="#222" stroke-width="0.3" text-anchor="middle" >ДА</text>
<text x="832.00" y="580.40" font-size="12.5" fill="#222" stroke="#222" stroke-width="0.3" text-anchor="middle" >3</text>
<text transform="translate(937.20,580.40) scale(1.036,1)" font-size="12.5" fill="#222" stroke="#222" stroke-width="0.3" text-anchor="middle" >200 100</text>
<text transform="translate(1025.20,580.40) scale(1.02,1)" font-size="12.5" fill="#222" stroke="#222" stroke-width="0.3" text-anchor="middle" >101,56</text>
<text transform="translate(1103.00,580.40) scale(1.02,1)" font-size="12.5" fill="#222" stroke="#222" stroke-width="0.3" text-anchor="middle" >101,62</text>
<text transform="translate(1165.50,580.40) scale(1.03,1)" font-size="12.5" fill="#222" stroke="#222" stroke-width="0.3" text-anchor="middle" >10,49</text>
<text transform="translate(1238.50,580.40) scale(1.05,1)" font-size="12.5" font-weight="bold" fill="#1F9D55" stroke="#1F9D55" stroke-width="0.1" text-anchor="middle" >10,37</text>
<text x="122.70" y="600.00" font-size="12.3" font-weight="bold" fill="#141414" stroke="#141414" stroke-width="0.1" text-anchor="middle" >МигКр 01МС</text>
<text transform="translate(306.00,600.00) scale(1.05,1)" font-size="12.5" fill="#222" stroke="#222" stroke-width="0.3" text-anchor="middle" >BB-(RU)/-</text>
<text transform="translate(537.80,600.00) scale(1.045,1)" font-size="12.5" fill="#222" stroke="#222" stroke-width="0.3" text-anchor="middle" >19.06.2022</text>
<text transform="translate(645.30,600.00) scale(1.04,1)" font-size="12.5" fill="#222" stroke="#222" stroke-width="0.3" text-anchor="middle" >0,7</text>
<text transform="translate(742.80,600.00) scale(1.04,1)" font-size="12.5" fill="#222" stroke="#222" stroke-width="0.3" text-anchor="middle" >ДА</text>
<text x="832.00" y="600.00" font-size="12.5" fill="#222" stroke="#222" stroke-width="0.3" text-anchor="middle" >3</text>
<text transform="translate(937.20,600.00) scale(1.036,1)" font-size="12.5" fill="#222" stroke="#222" stroke-width="0.3" text-anchor="middle" >253 364</text>
<text transform="translate(1025.20,600.00) scale(1.02,1)" font-size="12.5" fill="#222" stroke="#222" stroke-width="0.3" text-anchor="middle" >107,04</text>
<text transform="translate(1103.00,600.00) scale(1.02,1)" font-size="12.5" fill="#222" stroke="#222" stroke-width="0.3" text-anchor="middle" >106,57</text>
<text transform="translate(1165.50,600.00) scale(1.03,1)" font-size="12.5" fill="#222" stroke="#222" stroke-width="0.3" text-anchor="middle" >6,47</text>
<text transform="translate(1238.50,600.00) scale(1.05,1)" font-size="12.5" font-weight="bold" fill="#1F9D55" stroke="#1F9D55" stroke-width="0.1" text-anchor="middle" >6,37</text>
<text x="122.70" y="619.60" font-size="12.3" font-weight="bold" fill="#141414" stroke="#141414" stroke-width="0.1" text-anchor="middle" >ЧЗПСН-П Б1</text>
<text transform="translate(537.80,619.60) scale(1.045,1)" font-size="12.5" fill="#222" stroke="#222" stroke-width="0.3" text-anchor="middle" >12.07.2021</text>
<text transform="translate(645.30,619.60) scale(1.04,1)" font-size="12.5" fill="#222" stroke="#222" stroke-width="0.3" text-anchor="middle" >0,4</text>
<text transform="translate(742.80,619.60) scale(1.04,1)" font-size="12.5" fill="#222" stroke="#222" stroke-width="0.3" text-anchor="middle" >ДА</text>
<text x="832.00" y="619.60" font-size="12.5" fill="#222" stroke="#222" stroke-width="0.3" text-anchor="middle" >3</text>
<text transform="translate(937.20,619.60) scale(1.036,1)" font-size="12.5" fill="#222" stroke="#222" stroke-width="0.3" text-anchor="middle" >200 000</text>
<text transform="translate(1025.20,619.60) scale(1.02,1)" font-size="12.5" fill="#222" stroke="#222" stroke-width="0.3" text-anchor="middle" >103,24</text>
<text transform="translate(1103.00,619.60) scale(1.02,1)" font-size="12.5" fill="#222" stroke="#222" stroke-width="0.3" text-anchor="middle" >103,04</text>
<text transform="translate(1165.50,619.60) scale(1.03,1)" font-size="12.5" fill="#222" stroke="#222" stroke-width="0.3" text-anchor="middle" >9,09</text>
<text transform="translate(1238.50,619.60) scale(1.05,1)" font-size="12.5" font-weight="bold" fill="#1F9D55" stroke="#1F9D55" stroke-width="0.1" text-anchor="middle" >8,59</text>
<text x="122.70" y="639.20" font-size="12.3" font-weight="bold" fill="#141414" stroke="#141414" stroke-width="0.1" text-anchor="middle" >АйДиЭфБ01</text>
<text transform="translate(429.70,639.20) scale(1.07,1)" font-size="12.5" fill="#222" stroke="#222" stroke-width="0.3" text-anchor="middle" >/ruBBB-</text>
<text transform="translate(537.80,639.20) scale(1.045,1)" font-size="12.5" fill="#222" stroke="#222" stroke-width="0.3" text-anchor="middle" >25.05.2021</text>
<text transform="translate(645.30,639.20) scale(1.04,1)" font-size="12.5" fill="#222" stroke="#222" stroke-width="0.3" text-anchor="middle" >0,3</text>
<text transform="translate(742.80,639.20) scale(1.04,1)" font-size="12.5" fill="#222" stroke="#222" stroke-width="0.3" text-anchor="middle" >ДА</text>
<text x="832.00" y="639.20" font-size="12.5" fill="#222" stroke="#222" stroke-width="0.3" text-anchor="middle" >3</text>
<text transform="translate(937.20,639.20) scale(1.036,1)" font-size="12.5" fill="#222" stroke="#222" stroke-width="0.3" text-anchor="middle" >300 000</text>
<text transform="translate(1025.20,639.20) scale(1.02,1)" font-size="12.5" fill="#222" stroke="#222" stroke-width="0.3" text-anchor="middle" >101,98</text>
<text transform="translate(1103.00,639.20) scale(1.02,1)" font-size="12.5" fill="#222" stroke="#222" stroke-width="0.3" text-anchor="middle" >101,32</text>
<text transform="translate(1165.50,639.20) scale(1.03,1)" font-size="12.5" fill="#222" stroke="#222" stroke-width="0.3" text-anchor="middle" >9,15</text>
<text transform="translate(1238.50,639.20) scale(1.05,1)" font-size="12.5" font-weight="bold" fill="#C9202C" stroke="#C9202C" stroke-width="0.1" text-anchor="middle" >10,43</text>
<text x="122.60" y="72.20" font-size="12.5" fill="#2b2b2b" stroke="#2b2b2b" stroke-width="0.15" text-anchor="middle" textLength="37.00" lengthAdjust="spacingAndGlyphs" >Тикер</text>
<text x="306.25" y="63.30" font-size="12.5" fill="#2b2b2b" stroke="#2b2b2b" stroke-width="0.15" text-anchor="middle" textLength="102.50" lengthAdjust="spacingAndGlyphs" >Рейтинг эмитента</text>
<text x="305.50" y="80.80" font-size="12.5" fill="#2b2b2b" stroke="#2b2b2b" stroke-width="0.15" text-anchor="middle" textLength="112.00" lengthAdjust="spacingAndGlyphs" >(АКРА / Эксперт РА)</text>
<text x="429.50" y="63.30" font-size="12.5" fill="#2b2b2b" stroke="#2b2b2b" stroke-width="0.15" text-anchor="middle" textLength="96.00" lengthAdjust="spacingAndGlyphs" >Рейтинг эмиссии</text>
<text x="429.40" y="80.80" font-size="12.5" fill="#2b2b2b" stroke="#2b2b2b" stroke-width="0.15" text-anchor="middle" textLength="112.25" lengthAdjust="spacingAndGlyphs" >(АКРА / Эксперт РА)</text>
<text x="536.00" y="52.90" font-size="12.5" fill="#2b2b2b" stroke="#2b2b2b" stroke-width="0.15" text-anchor="middle" textLength="31.00" lengthAdjust="spacingAndGlyphs" >Дата</text>
<text x="537.25" y="71.80" font-size="12.5" fill="#2b2b2b" stroke="#2b2b2b" stroke-width="0.15" text-anchor="middle" textLength="76.50" lengthAdjust="spacingAndGlyphs" >погашения /</text>
<text x="537.25" y="91.10" font-size="12.5" fill="#2b2b2b" stroke="#2b2b2b" stroke-width="0.15" text-anchor="middle" textLength="47.50" lengthAdjust="spacingAndGlyphs" >оферты</text>
<text x="645.00" y="72.00" font-size="12.5" fill="#2b2b2b" stroke="#2b2b2b" stroke-width="0.15" text-anchor="middle" textLength="85.00" lengthAdjust="spacingAndGlyphs" >Дюрация, лет</text>
<text x="742.75" y="34.50" font-size="12.5" fill="#2b2b2b" stroke="#2b2b2b" stroke-width="0.15" text-anchor="middle" textLength="44.50" lengthAdjust="spacingAndGlyphs" >Сектор</text>
<text x="742.00" y="53.50" font-size="12.5" fill="#2b2b2b" stroke="#2b2b2b" stroke-width="0.15" text-anchor="middle" textLength="63.00" lengthAdjust="spacingAndGlyphs" >повышен-</text>
<text x="743.25" y="72.50" font-size="12.5" fill="#2b2b2b" stroke="#2b2b2b" stroke-width="0.15" text-anchor="middle" textLength="28.50" lengthAdjust="spacingAndGlyphs" >ного</text>
<text x="743.25" y="91.50" font-size="12.5" fill="#2b2b2b" stroke="#2b2b2b" stroke-width="0.15" text-anchor="middle" textLength="46.50" lengthAdjust="spacingAndGlyphs" >инвест.</text>
<text x="743.00" y="110.50" font-size="12.5" fill="#2b2b2b" stroke="#2b2b2b" stroke-width="0.15" text-anchor="middle" textLength="35.00" lengthAdjust="spacingAndGlyphs" >риска</text>
<text x="831.80" y="63.00" font-size="12.5" fill="#2b2b2b" stroke="#2b2b2b" stroke-width="0.15" text-anchor="middle" textLength="53.80" lengthAdjust="spacingAndGlyphs" >Уровень</text>
<text x="831.35" y="82.00" font-size="12.5" fill="#2b2b2b" stroke="#2b2b2b" stroke-width="0.15" text-anchor="middle" textLength="55.70" lengthAdjust="spacingAndGlyphs" >листинга</text>
<text x="931.70" y="52.50" font-size="12.5" fill="#2b2b2b" stroke="#2b2b2b" stroke-width="0.15" text-anchor="middle" textLength="54.40" lengthAdjust="spacingAndGlyphs" >Объем в</text>
<text x="932.10" y="72.00" font-size="12.5" fill="#2b2b2b" stroke="#2b2b2b" stroke-width="0.15" text-anchor="middle" textLength="76.60" lengthAdjust="spacingAndGlyphs" >обращении,</text>
<text x="932.00" y="90.50" font-size="12.5" fill="#2b2b2b" stroke="#2b2b2b" stroke-width="0.15" text-anchor="middle" textLength="55.90" lengthAdjust="spacingAndGlyphs" >тыс. руб.</text>
<text x="1056.00" y="34.80" font-size="12.5" fill="#2b2b2b" stroke="#2b2b2b" stroke-width="0.15" text-anchor="middle" textLength="133.00" lengthAdjust="spacingAndGlyphs" >Цена, % от номинала</text>
<text x="1206.50" y="34.80" font-size="12.5" fill="#2b2b2b" stroke="#2b2b2b" stroke-width="0.15" text-anchor="middle" textLength="92.00" lengthAdjust="spacingAndGlyphs" >Доходность, %</text>
<text x="1024.75" y="110.20" font-size="12.5" fill="#2b2b2b" stroke="#2b2b2b" stroke-width="0.15" text-anchor="middle" textLength="50.50" lengthAdjust="spacingAndGlyphs" >на 19.01</text>
<text x="1102.75" y="110.20" font-size="12.5" font-weight="bold" fill="#2b2b2b" stroke="#2b2b2b" stroke-width="0.1" text-anchor="middle" textLength="51.50" lengthAdjust="spacingAndGlyphs" >на 09.02</text>
<text x="1165.50" y="110.20" font-size="12.5" fill="#2b2b2b" stroke="#2b2b2b" stroke-width="0.15" text-anchor="middle" textLength="51.00" lengthAdjust="spacingAndGlyphs" >на 19.01</text>
<text x="1238.40" y="110.20" font-size="12.5" font-weight="bold" fill="#2b2b2b" stroke="#2b2b2b" stroke-width="0.1" text-anchor="middle" textLength="51.75" lengthAdjust="spacingAndGlyphs" >на 09.02</text>
<rect x="0.00" y="643.20" width="368.00" height="19.50" fill="#FFFF00" />
<rect x="368.00" y="643.20" width="340.00" height="19.50" fill="#B4C6E7" />
<line x1="708.00" y1="662.50" x2="1070.00" y2="662.50" stroke="#A8A8A8" stroke-width="1" stroke-dasharray="5.5 2.5"/>
<line x1="1070.00" y1="643.20" x2="1070.00" y2="662.70" stroke="#A8A8A8" stroke-width="1" stroke-dasharray="5.5 2.5"/>
<text x="184.00" y="658.00" font-size="12.5" font-weight="bold" fill="#141414" stroke="#141414" stroke-width="0.1" text-anchor="middle" textLength="255.00" lengthAdjust="spacingAndGlyphs" >выпуски с наибольшими доходностями</text>
<text x="538.00" y="658.00" font-size="12.5" fill="#222" stroke="#222" stroke-width="0.3" text-anchor="middle" textLength="292.50" lengthAdjust="spacingAndGlyphs" >доходность ниже 9,25% (ключевая ставка +5%)</text>
<text x="889.50" y="658.00" font-size="12.5" fill="#222" stroke="#222" stroke-width="0.3" text-anchor="middle" textLength="185.00" lengthAdjust="spacingAndGlyphs" >входит в портфели PRObonds</text>
<rect x="0.5" y="664.5" width="1276" height="540" fill="#fff" stroke="#D9D9D9" stroke-width="1"/>
<line x1="25.50" y1="711.50" x2="1248.50" y2="711.50" stroke="#DEDEDE" stroke-width="1" />
<text x="14.50" y="715.10" font-size="10" fill="#6a6a6a" stroke="#6a6a6a" stroke-width="0.05" text-anchor="end" >14</text>
<line x1="25.50" y1="770.50" x2="1248.50" y2="770.50" stroke="#DEDEDE" stroke-width="1" />
<text x="14.50" y="774.10" font-size="10" fill="#6a6a6a" stroke="#6a6a6a" stroke-width="0.05" text-anchor="end" >13</text>
<line x1="25.50" y1="828.50" x2="1248.50" y2="828.50" stroke="#DEDEDE" stroke-width="1" />
<text x="14.50" y="832.10" font-size="10" fill="#6a6a6a" stroke="#6a6a6a" stroke-width="0.05" text-anchor="end" >12</text>
<line x1="25.50" y1="887.50" x2="1248.50" y2="887.50" stroke="#DEDEDE" stroke-width="1" />
<text x="14.50" y="891.10" font-size="10" fill="#6a6a6a" stroke="#6a6a6a" stroke-width="0.05" text-anchor="end" >11</text>
<line x1="25.50" y1="946.50" x2="1248.50" y2="946.50" stroke="#DEDEDE" stroke-width="1" />
<text x="14.50" y="950.10" font-size="10" fill="#6a6a6a" stroke="#6a6a6a" stroke-width="0.05" text-anchor="end" >10</text>
<line x1="25.50" y1="1004.50" x2="1248.50" y2="1004.50" stroke="#DEDEDE" stroke-width="1" />
<text x="14.50" y="1008.10" font-size="10" fill="#6a6a6a" stroke="#6a6a6a" stroke-width="0.05" text-anchor="end" >9</text>
<line x1="25.50" y1="1063.50" x2="1248.50" y2="1063.50" stroke="#DEDEDE" stroke-width="1" />
<text x="14.50" y="1067.10" font-size="10" fill="#6a6a6a" stroke="#6a6a6a" stroke-width="0.05" text-anchor="end" >8</text>
<line x1="25.50" y1="1122.50" x2="1248.50" y2="1122.50" stroke="#DEDEDE" stroke-width="1" />
<text x="14.50" y="1126.10" font-size="10" fill="#6a6a6a" stroke="#6a6a6a" stroke-width="0.05" text-anchor="end" >7</text>
<line x1="25.50" y1="1181.50" x2="1248.50" y2="1181.50" stroke="#DEDEDE" stroke-width="1" />
<text x="14.50" y="1185.10" font-size="10" fill="#6a6a6a" stroke="#6a6a6a" stroke-width="0.05" text-anchor="end" >6</text>
<line x1="25.50" y1="711.50" x2="25.50" y2="1181.50" stroke="#DEDEDE" stroke-width="1" />
<text x="25.50" y="1199.80" font-size="10" fill="#6a6a6a" stroke="#6a6a6a" stroke-width="0.05" text-anchor="middle" >0</text>
<line x1="119.50" y1="711.50" x2="119.50" y2="1181.50" stroke="#DEDEDE" stroke-width="1" />
<text x="119.50" y="1199.80" font-size="10" fill="#6a6a6a" stroke="#6a6a6a" stroke-width="0.05" text-anchor="middle" >100</text>
<line x1="213.50" y1="711.50" x2="213.50" y2="1181.50" stroke="#DEDEDE" stroke-width="1" />
<text x="213.50" y="1199.80" font-size="10" fill="#6a6a6a" stroke="#6a6a6a" stroke-width="0.05" text-anchor="middle" >200</text>
<line x1="307.50" y1="711.50" x2="307.50" y2="1181.50" stroke="#DEDEDE" stroke-width="1" />
<text x="307.50" y="1199.80" font-size="10" fill="#6a6a6a" stroke="#6a6a6a" stroke-width="0.05" text-anchor="middle" >300</text>
<line x1="401.50" y1="711.50" x2="401.50" y2="1181.50" stroke="#DEDEDE" stroke-width="1" />
<text x="401.50" y="1199.80" font-size="10" fill="#6a6a6a" stroke="#6a6a6a" stroke-width="0.05" text-anchor="middle" >400</text>
<line x1="496.50" y1="711.50" x2="496.50" y2="1181.50" stroke="#DEDEDE" stroke-width="1" />
<text x="496.50" y="1199.80" font-size="10" fill="#6a6a6a" stroke="#6a6a6a" stroke-width="0.05" text-anchor="middle" >500</text>
<line x1="590.50" y1="711.50" x2="590.50" y2="1181.50" stroke="#DEDEDE" stroke-width="1" />
<text x="590.50" y="1199.80" font-size="10" fill="#6a6a6a" stroke="#6a6a6a" stroke-width="0.05" text-anchor="middle" >600</text>
<line x1="684.50" y1="711.50" x2="684.50" y2="1181.50" stroke="#DEDEDE" stroke-width="1" />
<text x="684.50" y="1199.80" font-size="10" fill="#6a6a6a" stroke="#6a6a6a" stroke-width="0.05" text-anchor="middle" >700</text>
<line x1="778.50" y1="711.50" x2="778.50" y2="1181.50" stroke="#DEDEDE" stroke-width="1" />
<text x="778.50" y="1199.80" font-size="10" fill="#6a6a6a" stroke="#6a6a6a" stroke-width="0.05" text-anchor="middle" >800</text>
<line x1="872.50" y1="711.50" x2="872.50" y2="1181.50" stroke="#DEDEDE" stroke-width="1" />
<text x="872.50" y="1199.80" font-size="10" fill="#6a6a6a" stroke="#6a6a6a" stroke-width="0.05" text-anchor="middle" >900</text>
<line x1="966.50" y1="711.50" x2="966.50" y2="1181.50" stroke="#DEDEDE" stroke-width="1" />
<text x="966.50" y="1199.80" font-size="10" fill="#6a6a6a" stroke="#6a6a6a" stroke-width="0.05" text-anchor="middle" >1000</text>
<line x1="1060.50" y1="711.50" x2="1060.50" y2="1181.50" stroke="#DEDEDE" stroke-width="1" />
<text x="1060.50" y="1199.80" font-size="10" fill="#6a6a6a" stroke="#6a6a6a" stroke-width="0.05" text-anchor="middle" >1100</text>
<line x1="1154.50" y1="711.50" x2="1154.50" y2="1181.50" stroke="#DEDEDE" stroke-width="1" />
<text x="1154.50" y="1199.80" font-size="10" fill="#6a6a6a" stroke="#6a6a6a" stroke-width="0.05" text-anchor="middle" >1200</text>
<line x1="1248.50" y1="711.50" x2="1248.50" y2="1181.50" stroke="#DEDEDE" stroke-width="1" />
<text x="1248.50" y="1199.80" font-size="10" fill="#6a6a6a" stroke="#6a6a6a" stroke-width="0.05" text-anchor="middle" >1300</text>
<text x="638.70" y="692.50" font-size="16.3" fill="#666666" text-anchor="middle" textLength="249.00" lengthAdjust="spacingAndGlyphs" >Высокодоходный сегмент (ПИР)</text>
<polyline points="116.16,1048.54 119.92,1044.21 123.68,1040.06 127.44,1036.06 131.20,1032.21 134.96,1028.49 138.72,1024.90 142.48,1021.43 146.25,1018.07 150.01,1014.81 153.77,1011.65 157.53,1008.58 161.29,1005.60 165.05,1002.70 168.81,999.87 172.57,997.12 176.33,994.44 180.09,991.82 183.85,989.27 187.61,986.78 191.38,984.35 195.14,981.97 198.90,979.64 202.66,977.36 206.42,975.13 210.18,972.95 213.94,970.81 217.70,968.71 221.46,966.65 225.22,964.64 228.98,962.66 232.74,960.71 236.50,958.81 240.27,956.93 244.03,955.09 247.79,953.28 251.55,951.50 255.31,949.75 259.07,948.03 262.83,946.33 266.59,944.67 270.35,943.02 274.11,941.41 277.87,939.81 281.63,938.25 285.40,936.70 289.16,935.18 292.92,933.67 296.68,932.19 300.44,930.73 304.20,929.29 307.96,927.87 311.72,926.47 315.48,925.08 319.24,923.72 323.00,922.37 326.76,921.03 330.52,919.72 334.29,918.42 338.05,917.14 341.81,915.87 345.57,914.61 349.33,913.38 353.09,912.15 356.85,910.94 360.61,909.74 364.37,908.56 368.13,907.39 371.89,906.23 375.65,905.09 379.42,903.96 383.18,902.84 386.94,901.73 390.70,900.63 394.46,899.54 398.22,898.47 401.98,897.40 405.74,896.35 409.50,895.31 413.26,894.27 417.02,893.25 420.78,892.24 424.54,891.23 428.31,890.24 432.07,889.25 435.83,888.28 439.59,887.31 443.35,886.35 447.11,885.40 450.87,884.46 454.63,883.53 458.39,882.60 462.15,881.69 465.91,880.78 469.67,879.88 473.44,878.98 477.20,878.10 480.96,877.22 484.72,876.35 488.48,875.48 492.24,874.62 496.00,873.77 499.76,872.93 503.52,872.09 507.28,871.26 511.04,870.44 514.80,869.62 518.56,868.81 522.33,868.00 526.09,867.20 529.85,866.41 533.61,865.62 537.37,864.84 541.13,864.07 544.89,863.30 548.65,862.53 552.41,861.77 556.17,861.02 559.93,860.27 563.69,859.53 567.46,858.79 571.22,858.06 574.98,857.33 578.74,856.60 582.50,855.89 586.26,855.17 590.02,854.47 593.78,853.76 597.54,853.06 601.30,852.37 605.06,851.68 608.82,850.99 612.58,850.31 616.35,849.63 620.11,848.96 623.87,848.29 627.63,847.63 631.39,846.97 635.15,846.31 638.91,845.66 642.67,845.02 646.43,844.37 650.19,843.73 653.95,843.10 657.71,842.46 661.48,841.84 665.24,841.21 669.00,840.59 672.76,839.97 676.52,839.36 680.28,838.75 684.04,838.14 687.80,837.54 691.56,836.94 695.32,836.34 699.08,835.75 702.84,835.16 706.60,834.57 710.37,833.99 714.13,833.41 717.89,832.83 721.65,832.26 725.41,831.68 729.17,831.12 732.93,830.55 736.69,829.99 740.45,829.43 744.21,828.88 747.97,828.32 751.73,827.77 755.50,827.23 759.26,826.68 763.02,826.14 766.78,825.60 770.54,825.06 774.30,824.53 778.06,824.00 781.82,823.47 785.58,822.95 789.34,822.42 793.10,821.90 796.86,821.38 800.62,820.87 804.39,820.36 808.15,819.85 811.91,819.34 815.67,818.83 819.43,818.33 823.19,817.83 826.95,817.33 830.71,816.83 834.47,816.34 838.23,815.85 841.99,815.36 845.75,814.87 849.52,814.39 853.28,813.91 857.04,813.43 860.80,812.95 864.56,812.47 868.32,812.00 872.08,811.53 875.84,811.06 879.60,810.59 883.36,810.12 887.12,809.66 890.88,809.20 894.64,808.74 898.41,808.28 902.17,807.83 905.93,807.37 909.69,806.92 913.45,806.47 917.21,806.02 920.97,805.58 924.73,805.13 928.49,804.69 932.25,804.25 936.01,803.81 939.77,803.38 943.54,802.94 947.30,802.51 951.06,802.08 954.82,801.65 958.58,801.22 962.34,800.79 966.10,800.37 969.86,799.95 973.62,799.52 977.38,799.11 981.14,798.69 984.90,798.27 988.66,797.86 992.43,797.44 996.19,797.03 999.95,796.62 1003.71,796.22 1007.47,795.81 1011.23,795.40 1014.99,795.00 1018.75,794.60 1022.51,794.20 1026.27,793.80 1030.03,793.40 1033.79,793.01 1037.56,792.61 1041.32,792.22 1045.08,791.83 1048.84,791.44 1052.60,791.05 1056.36,790.66 1060.12,790.28 1063.88,789.89 1067.64,789.51 1071.40,789.13 1075.16,788.75 1078.92,788.37 1082.68,787.99 1086.45,787.61 1090.21,787.24 1093.97,786.87 1097.73,786.49 1101.49,786.12 1105.25,785.75 1109.01,785.38 1112.77,785.02 1116.53,784.65 1120.29,784.29 1124.05,783.92 1127.81,783.56 1131.58,783.20 1135.34,782.84 1139.10,782.48 1142.86,782.13 1146.62,781.77 1150.38,781.41 1154.14,781.06 1157.90,780.71 1161.66,780.36 1165.42,780.01 1169.18,779.66 1172.94,779.31 1176.70,778.96" fill="none" stroke="#D08850" stroke-width="1.9" stroke-dasharray="1.9 1.85"/>
<polyline points="170.0,1033.0 168.5,1050.0" fill="none" stroke="#A6A6A6" stroke-width="0.9"/>
<polyline points="252.0,1155.0 259.0,1120.0 265.5,1119.5" fill="none" stroke="#A6A6A6" stroke-width="0.9"/>
<polyline points="443.5,941.0 437.5,957.0" fill="none" stroke="#A6A6A6" stroke-width="0.9"/>
<polyline points="457.5,929.0 460.0,980.5 466.0,980.5" fill="none" stroke="#A6A6A6" stroke-width="0.9"/>
<polyline points="517.0,883.0 507.5,935.0 502.0,935.0" fill="none" stroke="#A6A6A6" stroke-width="0.9"/>
<circle cx="116.70" cy="920.90" r="4.59" fill="#C8C8C8"/>
<circle cx="169.80" cy="1028.80" r="3.75" fill="#F4B183"/>
<circle cx="251.60" cy="1159.40" r="4.22" fill="#A9BFE6"/>
<circle cx="291.50" cy="924.60" r="3.75" fill="#6FA05A"/>
<circle cx="313.60" cy="894.90" r="4.11" fill="#5B9BD5"/>
<circle cx="334.60" cy="948.90" r="3.75" fill="#D8B23A"/>
<circle cx="355.20" cy="853.80" r="4.59" fill="#9E9E9E"/>
<circle cx="388.50" cy="895.30" r="4.96" fill="#E07B39"/>
<circle cx="395.00" cy="898.80" r="3.86" fill="#4A5F9A"/>
<circle cx="445.00" cy="937.40" r="3.75" fill="#9DC3E6"/>
<circle cx="448.40" cy="798.60" r="5.30" fill="#9ACD7E"/>
<circle cx="457.50" cy="925.70" r="3.75" fill="#FFD04A"/>
<circle cx="517.40" cy="879.80" r="3.42" fill="#CBCBCB"/>
<circle cx="527.30" cy="825.00" r="3.75" fill="#8EA9DB"/>
<circle cx="528.80" cy="1018.60" r="4.59" fill="#F2A679"/>
<circle cx="552.70" cy="839.50" r="5.93" fill="#5E8A48"/>
<circle cx="659.30" cy="809.80" r="4.59" fill="#4F7FBF"/>
<circle cx="690.00" cy="833.40" r="4.59" fill="#A68F36"/>
<circle cx="710.10" cy="811.30" r="4.59" fill="#8A8A8A"/>
<circle cx="756.20" cy="754.70" r="5.93" fill="#BF6D36"/>
<circle cx="760.70" cy="890.70" r="5.30" fill="#4E6FA8"/>
<circle cx="818.00" cy="757.30" r="7.01" fill="#7DBA5A"/>
<circle cx="854.50" cy="768.60" r="4.59" fill="#6FA8DC"/>
<circle cx="901.50" cy="798.20" r="4.59" fill="#FFC72C"/>
<circle cx="1068.50" cy="797.00" r="4.59" fill="#BDBDBD"/>
<circle cx="1158.00" cy="825.50" r="5.93" fill="#F1975A"/>
<circle cx="1179.60" cy="765.20" r="5.93" fill="#5A86D0"/>
<text transform="translate(121.10,1039.00) rotate(-90)" font-size="11.3" fill="#333333" stroke="#333333" stroke-width="0.5" textLength="101.20" lengthAdjust="spacingAndGlyphs">АйДиЭфБ01; 10,43</text>
<text transform="translate(171.40,1146.90) rotate(-90)" font-size="11.3" fill="#333333" stroke="#333333" stroke-width="0.5" textLength="96.40" lengthAdjust="spacingAndGlyphs">ЧЗПСН-П Б1; 8,59</text>
<text transform="translate(280.40,1169.20) rotate(-90)" font-size="11.3" fill="#333333" stroke="#333333" stroke-width="0.5" textLength="100.00" lengthAdjust="spacingAndGlyphs">МигКр 01МС; 6,37</text>
<text transform="translate(295.40,1043.90) rotate(-90)" font-size="11.3" fill="#333333" stroke="#333333" stroke-width="0.5" textLength="103.70" lengthAdjust="spacingAndGlyphs">Роделен1Р2; 10,37</text>
<text transform="translate(317.20,1016.70) rotate(-90)" font-size="11.3" fill="#333333" stroke="#333333" stroke-width="0.5" textLength="107.40" lengthAdjust="spacingAndGlyphs">ЧЗПСНП БП1; 10,88</text>
<text transform="translate(338.80,1067.50) rotate(-90)" font-size="11.3" fill="#333333" stroke="#333333" stroke-width="0.5" textLength="102.50" lengthAdjust="spacingAndGlyphs">АПРИФП БП1; 9,95</text>
<text transform="translate(359.20,980.30) rotate(-90)" font-size="11.3" fill="#333333" stroke="#333333" stroke-width="0.5" textLength="110.90" lengthAdjust="spacingAndGlyphs">АПРИФП БП2; 11,58</text>
<text transform="translate(393.40,1014.80) rotate(-90)" font-size="11.3" fill="#333333" stroke="#333333" stroke-width="0.5" textLength="103.30" lengthAdjust="spacingAndGlyphs">БДеньги1Р1; 10,87</text>
<text transform="translate(412.90,1008.60) rotate(-90)" font-size="11.3" fill="#333333" stroke="#333333" stroke-width="0.5" textLength="108.20" lengthAdjust="spacingAndGlyphs">КарМаниБ03; 10,81</text>
<text transform="translate(439.90,1061.90) rotate(-90)" font-size="11.3" fill="#333333" stroke="#333333" stroke-width="0.5" textLength="99.60" lengthAdjust="spacingAndGlyphs">ОАЭ  БО-П1; 10,15</text>
<text transform="translate(452.80,924.90) rotate(-90)" font-size="11.3" fill="#333333" stroke="#333333" stroke-width="0.5" textLength="108.60" lengthAdjust="spacingAndGlyphs">АПРИФП БП3; 12,52</text>
<text transform="translate(479.10,1030.60) rotate(-90)" font-size="11.3" fill="#333333" stroke="#333333" stroke-width="0.5" textLength="99.70" lengthAdjust="spacingAndGlyphs">ОАЭ  БО-П2; 10,35</text>
<text transform="translate(495.60,989.70) rotate(-90)" font-size="11.3" fill="#333333" stroke="#333333" stroke-width="0.5" textLength="109.40" lengthAdjust="spacingAndGlyphs">МСБЛиз2Р02; 11,13</text>
<text transform="translate(530.70,931.10) rotate(-90)" font-size="11.3" fill="#333333" stroke="#333333" stroke-width="0.5" textLength="90.60" lengthAdjust="spacingAndGlyphs">СОксБ1Р1; 12,07</text>
<text transform="translate(532.30,1137.00) rotate(-90)" font-size="11.3" fill="#333333" stroke="#333333" stroke-width="0.5" textLength="102.50" lengthAdjust="spacingAndGlyphs">МясничБОП3; 8,77</text>
<text transform="translate(556.40,963.90) rotate(-90)" font-size="11.3" fill="#333333" stroke="#333333" stroke-width="0.5" textLength="105.90" lengthAdjust="spacingAndGlyphs">Шевченк1Р1; 11,82</text>
<text transform="translate(663.20,933.10) rotate(-90)" font-size="11.3" fill="#333333" stroke="#333333" stroke-width="0.5" textLength="106.90" lengthAdjust="spacingAndGlyphs">БЭЛТИ БОП2; 12,32</text>
<text transform="translate(693.70,947.30) rotate(-90)" font-size="11.3" fill="#333333" stroke="#333333" stroke-width="0.5" textLength="97.50" lengthAdjust="spacingAndGlyphs">ИСпетр1Р1; 11,93</text>
<text transform="translate(714.70,923.20) rotate(-90)" font-size="11.3" fill="#333333" stroke="#333333" stroke-width="0.5" textLength="95.70" lengthAdjust="spacingAndGlyphs">Калита1Р1; 12,30</text>
<text transform="translate(760.40,882.00) rotate(-90)" font-size="11.3" fill="#333333" stroke="#333333" stroke-width="0.5" textLength="109.10" lengthAdjust="spacingAndGlyphs">АПРИФП БП4; 13,27</text>
<text transform="translate(764.80,1008.00) rotate(-90)" font-size="11.3" fill="#333333" stroke="#333333" stroke-width="0.5" textLength="100.50" lengthAdjust="spacingAndGlyphs">ОАЭ  БО-П3; 10,95</text>
<text transform="translate(821.40,872.10) rotate(-90)" font-size="11.3" fill="#333333" stroke="#333333" stroke-width="0.5" textLength="96.00" lengthAdjust="spacingAndGlyphs">АйДиЭф03; 13,22</text>
<text transform="translate(859.00,886.00) rotate(-90)" font-size="11.3" fill="#333333" stroke="#333333" stroke-width="0.5" textLength="100.70" lengthAdjust="spacingAndGlyphs">СНХТ БО-01; 13,03</text>
<text transform="translate(904.90,910.10) rotate(-90)" font-size="11.3" fill="#333333" stroke="#333333" stroke-width="0.5" textLength="95.10" lengthAdjust="spacingAndGlyphs">Калита1Р2; 12,52</text>
<text transform="translate(1071.90,920.00) rotate(-90)" font-size="11.3" fill="#333333" stroke="#333333" stroke-width="0.5" textLength="106.70" lengthAdjust="spacingAndGlyphs">Шевченк1Р2; 12,55</text>
<text transform="translate(1161.90,949.70) rotate(-90)" font-size="11.3" fill="#333333" stroke="#333333" stroke-width="0.5" textLength="107.40" lengthAdjust="spacingAndGlyphs">ЧЗПСНП БП2; 12,06</text>
<text transform="translate(1183.70,889.00) rotate(-90)" font-size="11.3" fill="#333333" stroke="#333333" stroke-width="0.5" textLength="106.20" lengthAdjust="spacingAndGlyphs">ЭлщитСтБП2; 13,09</text></svg>
</body></html>
